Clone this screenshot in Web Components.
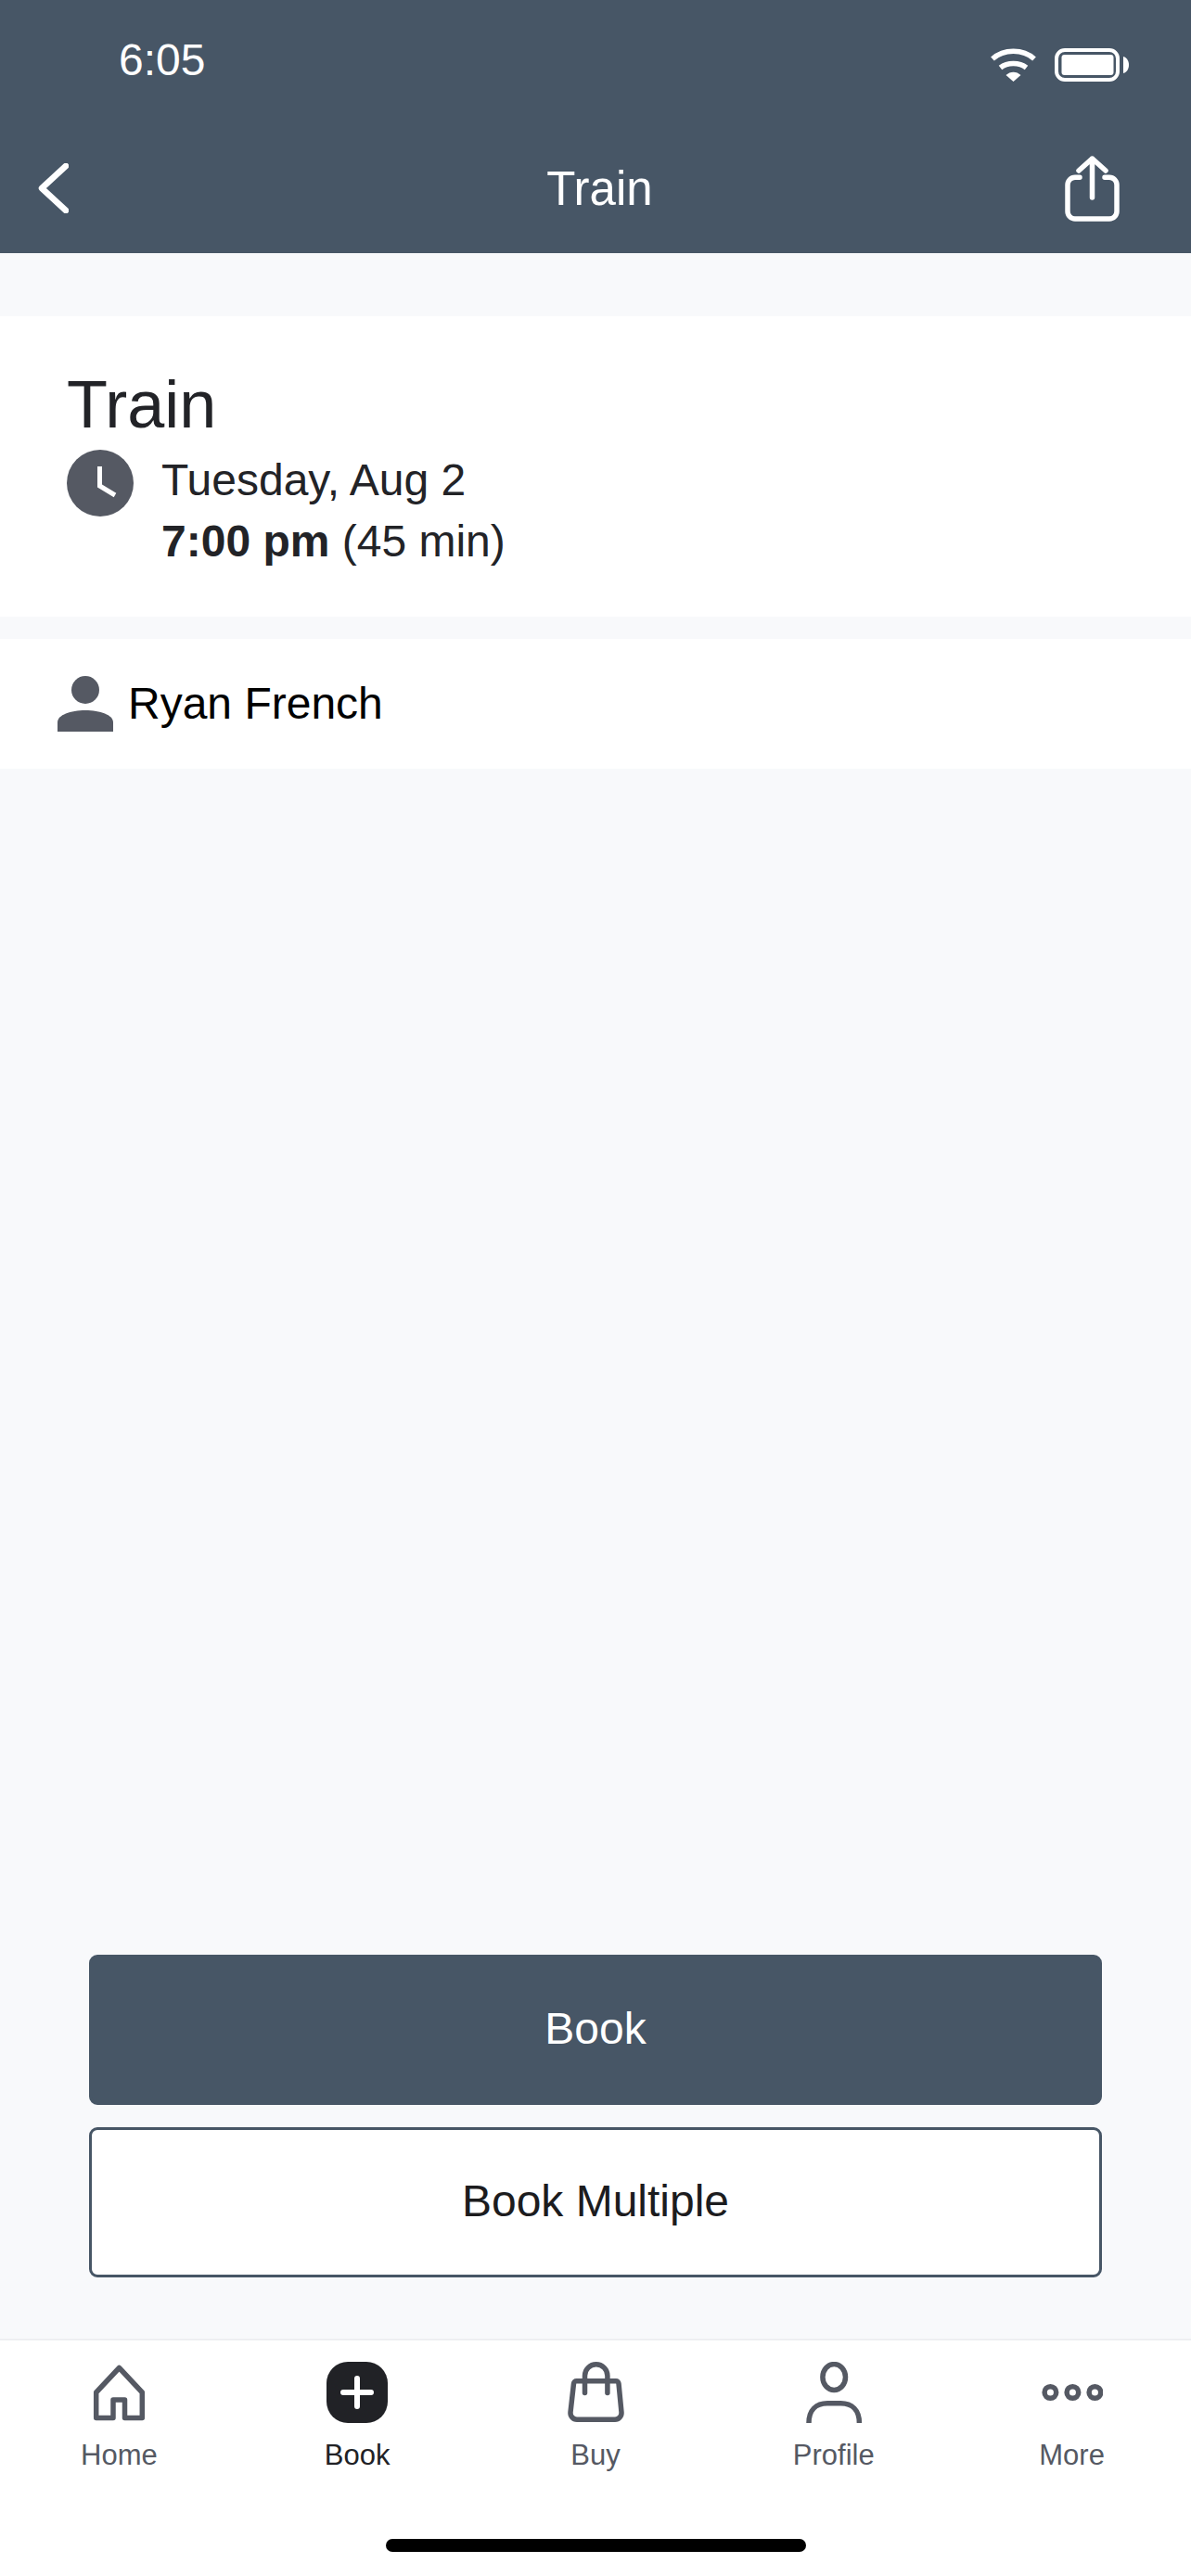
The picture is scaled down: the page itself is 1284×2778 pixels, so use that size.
<!DOCTYPE html>
<html lang="en">
<head>
<meta charset="utf-8">
<title>Train</title>
<style>
    html, body {
        margin: 0;
        height: 2778px;
    }
    body {
        display: flex;
        flex-direction: column;
        background: #f8f9fb;
        font-family: "Liberation Sans", Arial, sans-serif;
    }
</style>
</head>
<body>
    <app-header time="6:05" heading="Train"></app-header>
    <class-summary date="Tuesday, Aug 2" time="7:00 pm" length="(45 min)">Train</class-summary>
    <attendee-row>Ryan French</attendee-row>
    <book-actions>
        <book-button primary>Book</book-button>
        <book-button>Book Multiple</book-button>
    </book-actions>
    <tab-bar>
        <tab-item>
            <svg slot="icon" width="66" height="66" viewBox="0 0 66 66" fill="none" stroke="#555963" stroke-width="5.5" stroke-linejoin="round">
                <path d="M8.7 60.5V33L33.5 6.5L58.3 33V60.5H39.5V41H27V60.5Z"/>
            </svg>
            Home
        </tab-item>
        <tab-item active>
            <svg slot="icon" width="66" height="66" viewBox="0 0 66 66" fill="none">
                <rect width="66" height="66" rx="23" fill="#212226"/>
                <path d="M33 18V48M18 33H48" stroke="#fff" stroke-width="6" stroke-linecap="round"/>
            </svg>
            Book
        </tab-item>
        <tab-item>
            <svg slot="icon" width="66" height="66" viewBox="0 0 66 66" fill="none" stroke="#555963" stroke-width="5.5" stroke-linecap="round" stroke-linejoin="round">
                <path d="M12.5 20.8H55a3 3 0 0 1 3 2.7l3 31a7 7 0 0 1-7 7.7H13a7 7 0 0 1-7-7.7l3.5-31a3 3 0 0 1 3-2.7Z"/>
                <path d="M21.5 33.5V15a12.2 12.2 0 0 1 24.4 0V33.5"/>
            </svg>
            Buy
        </tab-item>
        <tab-item>
            <svg slot="icon" width="66" height="66" viewBox="0 0 66 66" fill="none" stroke="#555963" stroke-width="5.5">
                <ellipse cx="33.2" cy="16.5" rx="12.3" ry="13.9"/>
                <path d="M6 66C6 52 14 44.75 26 44.75H40.4C52.4 44.75 60.4 52 60.4 66"/>
            </svg>
            Profile
        </tab-item>
        <tab-item>
            <svg slot="icon" width="66" height="66" viewBox="0 0 66 66" fill="none" stroke="#555963" stroke-width="5.5">
                <circle cx="9.4" cy="33" r="6.3"/>
                <circle cx="33.4" cy="33" r="6.3"/>
                <circle cx="57.4" cy="33" r="6.3"/>
            </svg>
            More
        </tab-item>
    </tab-bar>

<script>
const headerTemplate = document.createElement('template');
headerTemplate.innerHTML = `
    <style>
        :host {
            display: block;
            height: 273px;
            background: #475666;
            color: #fff;
        }
        .status {
            display: flex;
            height: 133px;
            box-sizing: border-box;
            padding: 52px 67px 0 128px;
        }
        .time {
            font-size: 48px;
            line-height: 54px;
            margin-top: -14px;
            flex: 1;
        }
        .wifi {
            margin-right: 20px;
        }
        .nav {
            display: grid;
            grid-template-columns: 1fr auto 1fr;
            align-items: center;
            height: 140px;
            padding: 0 41px;
        }
        .title {
            font-size: 51px;
            line-height: 56px;
            padding: 2px 0 0 9px;
        }
        .share {
            justify-self: end;
            margin-right: 36px;
        }
    </style>
    <div class="status">
        <div class="time"></div>
        <svg class="wifi" width="49" height="36" viewBox="0 0 49 36" fill="#fff">
            <path d="M2 11.5C14 0.5 35 0.5 47 11.5M10.5 21C18 15 31 15 38.5 21" fill="none" stroke="#fff" stroke-width="5.5"/>
            <path d="M24.5 36L16.5 29C21 24.5 28 24.5 32.5 29Z"/>
        </svg>
        <svg width="80" height="36" viewBox="0 0 80 36" fill="#fff">
            <rect x="2" y="2" width="66" height="32" rx="9" fill="none" stroke="#fff" stroke-width="4"/>
            <rect x="7.5" y="7" width="56" height="22" rx="3"/>
            <path d="M74 9C78 10 80 14 80 18C80 22 78 26 74 27Z"/>
        </svg>
    </div>
    <div class="nav">
        <svg width="33" height="54" viewBox="0 0 33 54" fill="none" stroke="#fff" stroke-width="6.5" stroke-linecap="round" stroke-linejoin="round">
            <path d="M30 3L4 27L30 51"/>
        </svg>
        <div class="title"></div>
        <svg class="share" width="59" height="71" viewBox="0 0 59 71" fill="none" stroke="#fff" stroke-width="5.5" stroke-linecap="round" stroke-linejoin="round">
            <path d="M29.5 45V3M15 16L29.5 3L44 16"/>
            <path d="M16 23.3H11a8 8 0 0 0-8 8V60a8 8 0 0 0 8 8H48a8 8 0 0 0 8-8V31.3a8 8 0 0 0-8-8H43"/>
        </svg>
    </div>
`;
class AppHeader extends HTMLElement {
    constructor() {
        super();
        this.attachShadow({mode: 'open'});
        this.shadowRoot.appendChild(headerTemplate.content.cloneNode(true));
        this.shadowRoot.querySelector('.time').textContent = this.getAttribute('time');
        this.shadowRoot.querySelector('.title').textContent = this.getAttribute('heading');
    }
}

const summaryTemplate = document.createElement('template');
summaryTemplate.innerHTML = `
    <style>
        :host {
            display: block;
            margin-top: 68px;
            padding: 57px 72px 48px;
            background: #fff;
            color: #222327;
        }
        h2 {
            margin: 0 0 11px;
            font-size: 72px;
            font-weight: normal;
            line-height: 76px;
        }
        .when {
            display: flex;
            gap: 30px;
            font-size: 48px;
            line-height: 66px;
        }
        svg {
            flex: none;
        }
        b {
            font-weight: bold;
        }
    </style>
    <h2><slot></slot></h2>
    <div class="when">
        <svg width="72" height="72" viewBox="0 0 72 72">
            <circle cx="36" cy="36" r="36" fill="#555963"/>
            <path d="M35.5 18V39L52 49" fill="none" stroke="#fff" stroke-width="5"/>
        </svg>
        <div>
            <div class="date"></div>
            <div><b class="time"></b> <span class="length"></span></div>
        </div>
    </div>
`;
class ClassSummary extends HTMLElement {
    constructor() {
        super();
        this.attachShadow({mode: 'open'});
        this.shadowRoot.appendChild(summaryTemplate.content.cloneNode(true));
        this.shadowRoot.querySelector('.date').textContent = this.getAttribute('date');
        this.shadowRoot.querySelector('.time').textContent = this.getAttribute('time');
        this.shadowRoot.querySelector('.length').textContent = this.getAttribute('length');
    }
}

const attendeeTemplate = document.createElement('template');
attendeeTemplate.innerHTML = `
    <style>
        :host {
            display: flex;
            align-items: center;
            gap: 16px;
            height: 140px;
            margin-top: 24px;
            padding-left: 62px;
            background: #fff;
            color: #000;
            font-size: 48px;
            line-height: 56px;
        }
    </style>
    <svg width="60" height="60" viewBox="0 0 60 60" fill="#555963">
        <ellipse cx="30" cy="15" rx="15" ry="15"/>
        <path d="M0 60V50C0 42 14 37 30 37S60 42 60 50V60Z"/>
    </svg>
    <slot></slot>
`;
class AttendeeRow extends HTMLElement {
    constructor() {
        super();
        this.attachShadow({mode: 'open'});
        this.shadowRoot.appendChild(attendeeTemplate.content.cloneNode(true));
    }
}

const actionsTemplate = document.createElement('template');
actionsTemplate.innerHTML = `
    <style>
        :host {
            display: flex;
            flex-direction: column;
            gap: 24px;
            margin-top: auto;
            padding: 0 96px 66px;
        }
    </style>
    <slot></slot>
`;
class BookActions extends HTMLElement {
    constructor() {
        super();
        this.attachShadow({mode: 'open'});
        this.shadowRoot.appendChild(actionsTemplate.content.cloneNode(true));
    }
}

const buttonTemplate = document.createElement('template');
buttonTemplate.innerHTML = `
    <style>
        :host {
            display: flex;
            align-items: center;
            justify-content: center;
            box-sizing: border-box;
            height: 162px;
            padding-bottom: 3px;
            border: 3px solid #475666;
            border-radius: 9px;
            background: #fff;
            color: #1c1c1e;
            font-size: 48px;
            cursor: pointer;
        }
        :host([primary]) {
            background: #475666;
            color: #fff;
        }
    </style>
    <slot></slot>
`;
class BookButton extends HTMLElement {
    constructor() {
        super();
        this.attachShadow({mode: 'open'});
        this.shadowRoot.appendChild(buttonTemplate.content.cloneNode(true));
    }
}

const tabBarTemplate = document.createElement('template');
tabBarTemplate.innerHTML = `
    <style>
        :host {
            display: block;
            height: 256px;
            box-sizing: border-box;
            border-top: 2px solid #eeeff1;
            background: #fff;
        }
        .tabs {
            display: grid;
            grid-template-columns: repeat(5, 1fr);
            padding-top: 23px;
        }
        .home-bar {
            width: 453px;
            height: 14px;
            margin: 72px auto 0;
            border-radius: 7px;
            background: #000;
        }
    </style>
    <div class="tabs"><slot></slot></div>
    <div class="home-bar"></div>
`;
class TabBar extends HTMLElement {
    constructor() {
        super();
        this.attachShadow({mode: 'open'});
        this.shadowRoot.appendChild(tabBarTemplate.content.cloneNode(true));
    }
}

const tabTemplate = document.createElement('template');
tabTemplate.innerHTML = `
    <style>
        :host {
            display: flex;
            flex-direction: column;
            align-items: center;
            gap: 17px;
            color: #555963;
            font-size: 31px;
            line-height: 36px;
        }
        :host([active]) {
            color: #212226;
        }
        .icon {
            height: 66px;
        }
    </style>
    <div class="icon"><slot name="icon"></slot></div>
    <div><slot></slot></div>
`;
class TabItem extends HTMLElement {
    constructor() {
        super();
        this.attachShadow({mode: 'open'});
        this.shadowRoot.appendChild(tabTemplate.content.cloneNode(true));
    }
}

window.customElements.define('app-header', AppHeader);
window.customElements.define('class-summary', ClassSummary);
window.customElements.define('attendee-row', AttendeeRow);
window.customElements.define('book-actions', BookActions);
window.customElements.define('book-button', BookButton);
window.customElements.define('tab-bar', TabBar);
window.customElements.define('tab-item', TabItem);
</script>
</body>
</html>
